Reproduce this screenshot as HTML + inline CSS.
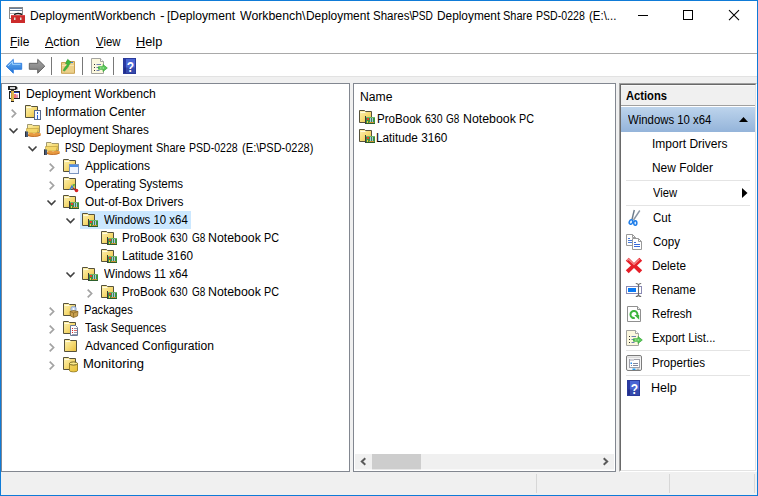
<!DOCTYPE html>
<html><head><meta charset="utf-8"><title>DeploymentWorkbench</title>
<style>
html,body{margin:0;padding:0;background:#fff;overflow:hidden}
#w{position:relative;width:758px;height:496px;background:#fff;overflow:hidden;font-family:"Liberation Sans", sans-serif;color:#000}
.t{position:absolute;white-space:nowrap;line-height:16px;height:16px;transform-origin:0 50%;display:block}
.t u{text-decoration:underline;text-underline-offset:1px}
.ic{position:absolute;overflow:visible}
.b{position:absolute}
.sel{position:absolute;background:#cce8ff}
</style></head><body>
<div id="w">
<svg width="0" height="0" style="position:absolute"><defs>
<linearGradient id="gF" x1="0" y1="0" x2="1" y2="1"><stop offset="0" stop-color="#fdf3b4"/><stop offset=".5" stop-color="#f6dc78"/><stop offset="1" stop-color="#e8bd3a"/></linearGradient>
<g id="folder"><path d="M0.5 2.500 H5.500 L6.500 3.500 H12.500 V14.500 H0.500 Z" fill="url(#gF)" stroke="#56523c" stroke-width="1"/><path d="M1.500 4.500H6.500" stroke="#fffbe0" stroke-width="1" fill="none"/></g>
<g id="i-plain"><use href="#folder" x="1"/></g>
<g id="i-drv"><use href="#folder"/><g transform="translate(0,-1)"><rect x="6" y="9" width="1" height="8" fill="#3a3a3a"/><rect x="7" y="10.500" width="9" height="6" fill="#3d9140"/><rect x="7" y="10" width="9" height="1" fill="#6fb56a"/><rect x="7" y="16" width="9" height="1" fill="#2c5e2c"/><rect x="8" y="11" width="2" height="2" fill="#e8402a"/><rect x="8" y="14" width="1" height="2" fill="#f0d040"/><rect x="11" y="11" width="1" height="4" fill="#a8c0e8"/><rect x="13" y="11" width="1" height="4" fill="#a8c0e8"/><rect x="10" y="15" width="5" height="1" fill="#c89030"/></g></g>
<g id="i-info"><use href="#folder"/><rect x="9.500" y="7.500" width="6" height="9" fill="#f4f8ff" stroke="#5a6a8a"/><rect x="12" y="9" width="1" height="2" fill="#2a63d0"/><rect x="12" y="12" width="1" height="4" fill="#2a63d0"/></g>
<g id="i-share"><path d="M2.500 3.500 H7 L8 4.500 H14.500 V11.500 H2.500 Z" fill="url(#gF)" stroke="#8a8258" stroke-width=".8"/><path d="M1.500 7.500 H13.500 L12 12 H1.500 Z" fill="#f4d76a" stroke="#b89a3a" stroke-width=".6"/><path d="M3 13 C5 11.200 7 11.500 9 12.500 C11 11.500 13.500 11.500 16 12.500 L15.500 14.500 C12 16 6 16 3 15 Z" fill="#e89a40"/><path d="M3 14.500 C7 16 12 15.800 15.500 14.200" stroke="#b8601a" stroke-width=".8" fill="none"/><rect x="0" y="10.500" width="3" height="5.500" fill="#4a5a72"/><rect x="0" y="10.500" width="1" height="5.500" fill="#2a2f3a"/></g>
<g id="i-apps"><use href="#folder"/><rect x="6.500" y="7.500" width="9" height="9" fill="#f0f5ff" stroke="#7a94c0"/><rect x="7" y="8" width="8" height="2" fill="#4f8fe6"/></g>
<g id="i-os"><use href="#folder"/><path d="M6 15 L9 9.500 L11.500 15 L10 15 L9 12.500 L7.500 15 Z" fill="#3a7bd5"/><path d="M9.500 9.500 L12 9 L11 12 Z" fill="#3fae3f"/><circle cx="13.500" cy="15.500" r="1.800" fill="#dd2222"/><path d="M10 13 L13 15.500" stroke="#aa2222" stroke-width="1.200"/></g>
<g id="i-pkg"><use href="#folder"/><circle cx="10.500" cy="8" r="2.800" fill="#b8ccec" stroke="#7a94c0" stroke-width=".6"/><circle cx="10.500" cy="8" r="1" fill="#fff"/><path d="M7 10.500 L10.500 9.500 L15 10.500 L14.500 15 L10.500 16.500 L7.500 15 Z" fill="#c8a050" stroke="#7a5a1a" stroke-width=".7"/><path d="M7 10.500 L10.500 12 L15 10.500 M10.500 12 V16.500" stroke="#7a5a1a" stroke-width=".6" fill="none"/></g>
<g id="i-ts"><use href="#folder"/><path d="M7.500 6.500 H12.500 L14.500 8.500 V16.500 H7.500 Z" fill="#fdfdff" stroke="#6a7a9a"/><rect x="9" y="9" width="1" height="1" fill="#d22"/><rect x="11" y="9" width="3" height="1" fill="#99a"/><rect x="9" y="11" width="1" height="1" fill="#d22"/><rect x="11" y="11" width="3" height="1" fill="#d66"/><rect x="9" y="13" width="1" height="1" fill="#d22"/><rect x="11" y="13" width="3" height="1" fill="#99a"/><rect x="9" y="15" width="5" height="1" fill="#99a"/></g>
<g id="i-mon"><use href="#folder"/><path d="M6.500 8.500 V15.500 C6.500 17.200 14.500 17.200 14.500 15.500 V8.500" fill="url(#gF)" stroke="#6a5a1a" stroke-width=".9"/><path d="M6.500 8.500 V15.500 C6.500 17.200 14.500 17.200 14.500 15.500 V8.500 Z" fill="#e8c030" opacity=".6"/><ellipse cx="10.500" cy="8.500" rx="4" ry="1.600" fill="#fbe98a" stroke="#6a5a1a" stroke-width=".9"/></g>
<g id="i-wb"><rect x="1" y="1" width="8" height="4" fill="#222"/><rect x="3" y="2" width="5" height="2" fill="#d0d0d0"/><path d="M9 1 L10.500 2.500 L10.200 5 L9 4 Z" fill="#222"/><rect x="4" y="5" width="3" height="1.500" fill="#444"/><rect x="2.500" y="6.500" width="10" height="7" fill="#fff" stroke="#222"/><rect x="3" y="7" width="9" height="1" fill="#2a3fb8"/><rect x="7" y="9" width="2" height="4" fill="#f4737c"/><rect x="9" y="9.500" width="2" height="3.500" fill="#dc93ab"/><rect x="4" y="6" width="3" height="10" fill="#dcb44e"/><rect x="4" y="6" width="1" height="10" fill="#c09a3c"/><rect x="4" y="16" width="3" height="1" fill="#222"/></g>
<g id="i-app"><rect x="1.500" y="1.500" width="13" height="11" fill="#fff" stroke="#8a8a8a"/><path d="M2 2.500H14M2 4.500H14" stroke="#6a7f9a" fill="none"/><path d="M2 7.500H14" stroke="#b0b0b0" fill="none"/><rect x="3" y="9" width="14" height="8" fill="#cc2b2b"/><rect x="3" y="9" width="14" height="1" fill="#dc4a4a"/><path d="M6.500 9 C6.500 7 13.500 7 13.500 9" fill="none" stroke="#1a1a1a" stroke-width="1.300"/><rect x="6" y="11.500" width="1.500" height="2.500" fill="#d8e0d8"/><rect x="12" y="11.500" width="1.500" height="2.500" fill="#d8e0d8"/></g>
<linearGradient id="gB" x1="0" y1="0" x2="0" y2="1"><stop offset="0" stop-color="#6db3f5"/><stop offset="1" stop-color="#1f6fd0"/></linearGradient>
<linearGradient id="gG" x1="0" y1="0" x2="0" y2="1"><stop offset="0" stop-color="#a4a4a4"/><stop offset="1" stop-color="#7a7a7a"/></linearGradient>
<g id="i-back"><path d="M1.200 9.200 L8.300 2.300 V6.300 H16.700 V12.300 H8.300 V16.200 Z" fill="url(#gB)" stroke="#2a7ae0" stroke-width=".9"/><path d="M3 9 L7.500 4.600 V7.300 H15.500" stroke="#9fd4ff" stroke-width="1" fill="none"/></g>
<g id="i-fwd"><path d="M16.800 9.200 L9.700 2.300 V6.300 H1.300 V12.300 H9.700 V16.200 Z" fill="url(#gG)" stroke="#5a5a5a" stroke-width=".9"/></g>
<g id="i-up"><path d="M2.500 5.500 H6.500 L7.500 4.500 H15.500 V16.300 H2.500 Z" fill="#ecd08a" stroke="#c8a050"/><path d="M3 8.500H15" stroke="#f6e4b0" fill="none"/><path d="M4.200 13.500 C5.500 10.500 7 9 8.500 7.500 L6.500 6.500 L8.700 2.300 L12.500 5.500 L10.800 6.300 C10 9 8 12 5.500 14 Z" fill="#3cb83c" stroke="#2a8a2a" stroke-width=".5"/><rect x="12" y="5" width="2" height="1" fill="#3a7ad8"/></g>
<g id="i-export"><path d="M0.500 0.500 H9.500 L12.500 3.500 V15.500 H0.500 Z" fill="#fcf8de" stroke="#a4a4a0"/><path d="M9.500 0.500 V3.500 H12.500" fill="#fff" stroke="#a4a4a0"/><path d="M3 6.500H4M3 9.500H4M3 12.500H4" stroke="#333" fill="none"/><path d="M5.500 6.500H10M5.500 9.500H8M5.500 12.500H8.500" stroke="#7080b0" fill="none"/><path d="M7.500 8.700 H12 V6.500 L16.300 10 L12 13.500 V11.300 H7.500 Z" fill="#5cc85c" stroke="#32a832" stroke-width=".7"/><path d="M9 10H14" stroke="#b8f0b0" stroke-width="1" fill="none" stroke-dasharray="1.500 1"/></g>
<linearGradient id="gH" x1="0" y1="0" x2="1" y2="1"><stop offset="0" stop-color="#3f6fd8"/><stop offset="1" stop-color="#1a2f8a"/></linearGradient>
<g id="i-help"><rect x="0" y="0" width="13" height="16" fill="#4a66d4"/><rect x="0" y="0" width="3" height="16" fill="#2a3aa4"/><rect x="0" y="9.500" width="13" height="6.500" fill="#101860" opacity=".35"/><rect x="0.500" y="0.500" width="12" height="15" fill="none" stroke="#2a3a9a" stroke-width="1"/><text transform="translate(7.400 13.800) scale(.8 1)" x="0" y="0" font-family="Liberation Sans, sans-serif" font-size="15" font-weight="700" fill="#fff" text-anchor="middle">?</text></g>
<g id="i-cut"><path d="M9.300 1 L7 10.500" stroke="#6a7a8a" stroke-width="1.400" fill="none"/><path d="M14.800 1.500 L8.500 11" stroke="#8a96a4" stroke-width="1.400" fill="none"/><ellipse cx="6" cy="13" rx="1.700" ry="2.300" transform="rotate(25 6 13)" fill="#d8ecff" stroke="#1a7ae8" stroke-width="1.400"/><ellipse cx="10.300" cy="14" rx="1.600" ry="2.300" fill="#d8ecff" stroke="#1a7ae8" stroke-width="1.400"/></g>
<g id="i-copy"><path d="M1.500 1.500 H7.500 L10.500 4.500 V12.500 H1.500 Z" fill="#fff" stroke="#9a9a9a"/><path d="M7.500 1.500 V4.500 H10.500" fill="none" stroke="#9a9a9a"/><path d="M3 5.500H5M3 7.500H7M3 9.500H7" stroke="#4a7ad8" fill="none"/><path d="M7.500 5.500 H13.500 L16.500 8.500 V16.500 H7.500 Z" fill="#fff" stroke="#9a9a9a"/><path d="M13.500 5.500 V8.500 H16.500" fill="none" stroke="#9a9a9a"/><path d="M9 9.500H11M9 11.500H15M9 13.500H15" stroke="#3a6ad8" fill="none"/></g>
<g id="i-delete"><path d="M0.800 3.700 L3.700 0.800 L9 6 L14.300 0.800 L17.200 3.700 L12 8.500 L17.200 13.300 L14.300 16.200 L9 11 L3.700 16.200 L0.800 13.300 L6 8.500 Z" fill="#e61e28"/><path d="M2.200 3.500 L3.500 2.200 L9 7.500 L14.500 2.200" stroke="#f48a8a" stroke-width="1.200" fill="none"/></g>
<g id="i-rename"><rect x="1.500" y="5.500" width="15" height="7" fill="#fff" stroke="#8a8ab4"/><rect x="3" y="7" width="8" height="4" fill="#0a7af4"/><path d="M10.800 2.500 C12.500 2.500 13.500 3 13.500 4.500 V13.500 C13.500 15 12.500 15.500 10.800 15.500 M16.200 2.500 C14.500 2.500 13.500 3 13.500 4.500 M13.500 13.500 C13.500 15 14.500 15.500 16.200 15.500" stroke="#6a6a6a" stroke-width="1.100" fill="none"/></g>
<g id="i-refresh"><path d="M2.500 1.500 H12.500 L15.500 4.500 V16.500 H2.500 Z" fill="#fff" stroke="#909090"/><path d="M12.500 1.500 V4.500 H15.500" fill="#f0f0f0" stroke="#909090"/><path d="M12.300 10.500 A3.500 3.500 0 1 0 9.800 12.900" fill="none" stroke="#3db53d" stroke-width="2"/><path d="M9.300 10 H14.200 V14.800 Z" fill="#3db53d"/></g>
<g id="i-props"><rect x="1.500" y="1.500" width="15" height="15" rx="1.500" fill="#f4f4f4" stroke="#7c7c7c"/><rect x="2.500" y="2.500" width="13" height="1.500" fill="#dcdcdc"/><rect x="4.500" y="5.500" width="10" height="8" fill="#fff" stroke="#a0a0a8"/><rect x="5" y="5" width="4" height="2" fill="#d0d0d8"/><rect x="5.500" y="8.500" width="1.500" height="1.500" fill="#1f8af0"/><path d="M8 9.500H13M6 11.500H7M8 11.500H13" stroke="#8088a0" fill="none"/><rect x="7.500" y="14.500" width="3" height="1.500" fill="#1f9af4"/><rect x="11.500" y="14.500" width="3" height="1.500" fill="#b0b0b0"/></g>
</defs></svg>

<!-- window frame -->
<div class="b" style="left:0;top:0;width:758px;height:496px;box-sizing:border-box;border:1px solid #0f7bd7"></div>
<!-- title bar icon -->
<svg class="ic" style="left:8px;top:6px" width="18" height="18" viewBox="0 0 18 18"><use href="#i-app"/></svg>
<!-- caption buttons -->
<svg class="ic" style="left:630px;top:1px" width="127" height="30" viewBox="0 0 127 30">
<path d="M8 14.5H18" stroke="#000" stroke-width="1" fill="none"/>
<rect x="53.5" y="9.5" width="9" height="9" stroke="#000" stroke-width="1" fill="none"/>
<path d="M99 9.2 L109 19.2 M109 9.2 L99 19.2" stroke="#000" stroke-width="1.1" fill="none"/>
</svg>
<!-- menu bottom line -->
<div class="b" style="left:1px;top:53px;width:756px;height:1px;background:#a9a9a9"></div>
<!-- toolbar -->
<div class="b" style="left:1px;top:76px;width:756px;height:7px;background:#f0f0f0"></div>
<div class="b" style="left:1px;top:76px;width:756px;height:1px;background:#e2e2e2"></div>
<div class="b" style="left:51px;top:57px;width:1px;height:18px;background:#787878"></div>
<div class="b" style="left:82px;top:57px;width:1px;height:18px;background:#787878"></div>
<div class="b" style="left:113px;top:57px;width:1px;height:18px;background:#787878"></div>
<svg class="ic" style="left:5px;top:57px" width="18" height="18" viewBox="0 0 18 18"><use href="#i-back"/></svg>
<svg class="ic" style="left:28px;top:57px" width="18" height="18" viewBox="0 0 18 18"><use href="#i-fwd"/></svg>
<svg class="ic" style="left:59px;top:57px" width="18" height="18" viewBox="0 0 18 18"><use href="#i-up"/></svg>
<svg class="ic" style="left:91px;top:58px" width="18" height="18" viewBox="0 0 18 18"><use href="#i-export"/></svg>
<svg class="ic" style="left:123px;top:58px" width="18" height="18" viewBox="0 0 18 18"><use href="#i-help"/></svg>
<!-- client bg -->
<div class="b" style="left:1px;top:83px;width:756px;height:412px;background:#f0f0f0"></div>
<!-- tree pane -->
<div class="b" style="left:1px;top:83px;width:349px;height:389px;box-sizing:border-box;border:1px solid #828790;background:#fff"></div>
<!-- middle pane -->
<div class="b" style="left:353px;top:83px;width:263px;height:389px;box-sizing:border-box;border:1px solid #828790;background:#fff"></div>
<!-- h scrollbar -->
<div class="b" style="left:355px;top:454px;width:259px;height:15px;background:#f0f0f0;border-bottom:1px solid #f8f8f8"></div>
<div class="b" style="left:372px;top:454px;width:49px;height:15px;background:#cdcdcd;border-bottom:1px solid #e8e8e8"></div>
<svg class="ic" style="left:355px;top:454px" width="16" height="16" viewBox="0 0 16 16"><path d="M10.300 4.200 L6.800 7.500 L10.300 10.800" fill="none" stroke="#5a5a5a" stroke-width="2"/></svg>
<svg class="ic" style="left:598px;top:454px" width="16" height="16" viewBox="0 0 16 16"><path d="M5.700 4.200 L9.200 7.500 L5.700 10.800" fill="none" stroke="#5a5a5a" stroke-width="2"/></svg>
<!-- actions pane -->
<div class="b" style="left:619px;top:83px;width:138px;height:389px;box-sizing:border-box;background:#fff;border-top:1px solid #a0a0a0;border-left:1px solid #a0a0a0;border-right:1px solid #fff;border-bottom:1px solid #fff"></div>
<div class="b" style="left:620px;top:84px;width:136px;height:387px;box-sizing:border-box;border-top:1px solid #696969;border-left:1px solid #696969;border-right:1px solid #e3e3e3;border-bottom:1px solid #e3e3e3"></div>
<div class="b" style="left:621px;top:85px;width:134px;height:20px;background:#f0f0f0;border-top:1px solid #fafafa;box-sizing:border-box"></div>
<div class="b" style="left:621px;top:105px;width:134px;height:1px;background:#a0a0a0"></div>
<div class="b" style="left:621px;top:107px;width:134px;height:25px;background:linear-gradient(#bdd4ec,#94b4da)"></div>
<svg class="ic" style="left:738px;top:115px" width="12" height="9" viewBox="0 0 12 9"><path d="M1 7 L5.5 2 L10 7 Z" fill="#000"/></svg>
<svg class="ic" style="left:741px;top:187px" width="8" height="12" viewBox="0 0 8 12"><path d="M1 1 L6.5 6 L1 11 Z" fill="#000"/></svg>
<div class="b" style="left:626px;top:180px;width:124px;height:1px;background:#e4e4e4"></div>
<div class="b" style="left:626px;top:205px;width:124px;height:1px;background:#e4e4e4"></div>
<div class="b" style="left:626px;top:350px;width:124px;height:1px;background:#e4e4e4"></div>
<div class="b" style="left:626px;top:375px;width:124px;height:1px;background:#e4e4e4"></div>
<!-- action icons -->
<svg class="ic" style="left:625px;top:209px" width="18" height="18" viewBox="0 0 18 18"><use href="#i-cut"/></svg>
<svg class="ic" style="left:625px;top:233px" width="18" height="18" viewBox="0 0 18 18"><use href="#i-copy"/></svg>
<svg class="ic" style="left:625px;top:257px" width="18" height="18" viewBox="0 0 18 18"><use href="#i-delete"/></svg>
<svg class="ic" style="left:625px;top:281px" width="18" height="18" viewBox="0 0 18 18"><use href="#i-rename"/></svg>
<svg class="ic" style="left:625px;top:305px" width="18" height="18" viewBox="0 0 18 18"><use href="#i-refresh"/></svg>
<svg class="ic" style="left:626px;top:330px" width="18" height="18" viewBox="0 0 18 18"><use href="#i-export"/></svg>
<svg class="ic" style="left:625px;top:354px" width="18" height="18" viewBox="0 0 18 18"><use href="#i-props"/></svg>
<svg class="ic" style="left:627px;top:380px" width="18" height="18" viewBox="0 0 18 18"><use href="#i-help"/></svg>
<!-- list icons -->
<svg class="ic" style="left:359px;top:108px" width="18" height="18" viewBox="0 0 18 18"><use href="#i-drv"/></svg>
<svg class="ic" style="left:359px;top:127px" width="18" height="18" viewBox="0 0 18 18"><use href="#i-drv"/></svg>
<!-- status bar -->
<div class="b" style="left:536px;top:474px;width:1px;height:19px;background:#d7d7d7"></div>
<div class="b" style="left:669px;top:474px;width:1px;height:19px;background:#d7d7d7"></div>
<div class="b" style="left:754px;top:474px;width:1px;height:19px;background:#d7d7d7"></div>

<svg class="ic" style="left:7px;top:85px" width="18" height="18" viewBox="0 0 18 18"><use href="#i-wb"/></svg>
<svg class="ic" style="left:25px;top:103px" width="18" height="18" viewBox="0 0 18 18"><use href="#i-info"/></svg>
<svg class="ic" style="left:6px;top:103px" width="16" height="18" viewBox="0 0 16 18"><path d="M5.7 6.6 L9.6 10.5 L5.7 14.4" fill="none" stroke="#a3a3a3" stroke-width="1.7"/></svg>
<svg class="ic" style="left:25px;top:121px" width="18" height="18" viewBox="0 0 18 18"><use href="#i-share"/></svg>
<svg class="ic" style="left:6px;top:121px" width="16" height="18" viewBox="0 0 16 18"><path d="M3.5 7.5 L7.5 11.5 L11.5 7.5" fill="none" stroke="#404040" stroke-width="1.6"/></svg>
<svg class="ic" style="left:44px;top:139px" width="18" height="18" viewBox="0 0 18 18"><use href="#i-share"/></svg>
<svg class="ic" style="left:25px;top:139px" width="16" height="18" viewBox="0 0 16 18"><path d="M3.5 7.5 L7.5 11.5 L11.5 7.5" fill="none" stroke="#404040" stroke-width="1.6"/></svg>
<svg class="ic" style="left:63px;top:157px" width="18" height="18" viewBox="0 0 18 18"><use href="#i-apps"/></svg>
<svg class="ic" style="left:44px;top:157px" width="16" height="18" viewBox="0 0 16 18"><path d="M5.7 6.6 L9.6 10.5 L5.7 14.4" fill="none" stroke="#a3a3a3" stroke-width="1.7"/></svg>
<svg class="ic" style="left:63px;top:175px" width="18" height="18" viewBox="0 0 18 18"><use href="#i-os"/></svg>
<svg class="ic" style="left:44px;top:175px" width="16" height="18" viewBox="0 0 16 18"><path d="M5.7 6.6 L9.6 10.5 L5.7 14.4" fill="none" stroke="#a3a3a3" stroke-width="1.7"/></svg>
<svg class="ic" style="left:63px;top:193px" width="18" height="18" viewBox="0 0 18 18"><use href="#i-drv"/></svg>
<svg class="ic" style="left:44px;top:193px" width="16" height="18" viewBox="0 0 16 18"><path d="M3.5 7.5 L7.5 11.5 L11.5 7.5" fill="none" stroke="#404040" stroke-width="1.6"/></svg>
<div class="sel" style="left:80px;top:211px;width:111px;height:18px"></div>
<svg class="ic" style="left:82px;top:211px" width="18" height="18" viewBox="0 0 18 18"><use href="#i-drv"/></svg>
<svg class="ic" style="left:63px;top:211px" width="16" height="18" viewBox="0 0 16 18"><path d="M3.5 7.5 L7.5 11.5 L11.5 7.5" fill="none" stroke="#404040" stroke-width="1.6"/></svg>
<svg class="ic" style="left:101px;top:229px" width="18" height="18" viewBox="0 0 18 18"><use href="#i-drv"/></svg>
<svg class="ic" style="left:101px;top:247px" width="18" height="18" viewBox="0 0 18 18"><use href="#i-drv"/></svg>
<svg class="ic" style="left:82px;top:265px" width="18" height="18" viewBox="0 0 18 18"><use href="#i-drv"/></svg>
<svg class="ic" style="left:63px;top:265px" width="16" height="18" viewBox="0 0 16 18"><path d="M3.5 7.5 L7.5 11.5 L11.5 7.5" fill="none" stroke="#404040" stroke-width="1.6"/></svg>
<svg class="ic" style="left:101px;top:283px" width="18" height="18" viewBox="0 0 18 18"><use href="#i-drv"/></svg>
<svg class="ic" style="left:82px;top:283px" width="16" height="18" viewBox="0 0 16 18"><path d="M5.7 6.6 L9.6 10.5 L5.7 14.4" fill="none" stroke="#a3a3a3" stroke-width="1.7"/></svg>
<svg class="ic" style="left:63px;top:301px" width="18" height="18" viewBox="0 0 18 18"><use href="#i-pkg"/></svg>
<svg class="ic" style="left:44px;top:301px" width="16" height="18" viewBox="0 0 16 18"><path d="M5.7 6.6 L9.6 10.5 L5.7 14.4" fill="none" stroke="#a3a3a3" stroke-width="1.7"/></svg>
<svg class="ic" style="left:63px;top:319px" width="18" height="18" viewBox="0 0 18 18"><use href="#i-ts"/></svg>
<svg class="ic" style="left:44px;top:319px" width="16" height="18" viewBox="0 0 16 18"><path d="M5.7 6.6 L9.6 10.5 L5.7 14.4" fill="none" stroke="#a3a3a3" stroke-width="1.7"/></svg>
<svg class="ic" style="left:63px;top:337px" width="18" height="18" viewBox="0 0 18 18"><use href="#i-plain"/></svg>
<svg class="ic" style="left:44px;top:337px" width="16" height="18" viewBox="0 0 16 18"><path d="M5.7 6.6 L9.6 10.5 L5.7 14.4" fill="none" stroke="#a3a3a3" stroke-width="1.7"/></svg>
<svg class="ic" style="left:63px;top:355px" width="18" height="18" viewBox="0 0 18 18"><use href="#i-mon"/></svg>
<svg class="ic" style="left:44px;top:355px" width="16" height="18" viewBox="0 0 16 18"><path d="M5.7 6.6 L9.6 10.5 L5.7 14.4" fill="none" stroke="#a3a3a3" stroke-width="1.7"/></svg>
<span class="t" id="t0" style="left:29.99px;top:8px;font-size:12px;font-weight:400;transform:scaleX(1.0081)">DeploymentWorkbench</span>
<span class="t" id="t1" style="left:160.00px;top:8px;font-size:12px;font-weight:400;transform:scaleX(1.1500)">-</span>
<span class="t" id="t2" style="left:166.99px;top:8px;font-size:12px;font-weight:400;transform:scaleX(1.0106)">[Deployment</span>
<span class="t" id="t3" style="left:239.70px;top:8px;font-size:12px;font-weight:400;transform:scaleX(1.0266)">Workbench\</span>
<span class="t" id="t4" style="left:306.00px;top:8px;font-size:12px;font-weight:400;transform:scaleX(0.9952)">Deployment</span>
<span class="t" id="t5" style="left:372.94px;top:8px;font-size:12px;font-weight:400;transform:scaleX(0.9600)">Shares\</span>
<span class="t" id="t6" style="left:412.45px;top:8px;font-size:12px;font-weight:400;transform:scaleX(0.8478)">PSD</span>
<span class="t" id="t7" style="left:436.51px;top:8px;font-size:12px;font-weight:400;transform:scaleX(0.9873)">Deployment</span>
<span class="t" id="t8" style="left:502.98px;top:8px;font-size:12px;font-weight:400;transform:scaleX(0.9161)">Share</span>
<span class="t" id="t9" style="left:536.42px;top:8px;font-size:12px;font-weight:400;transform:scaleX(0.8815)">PSD-0228</span>
<span class="t" id="t10" style="left:589.44px;top:8px;font-size:12px;font-weight:400;transform:scaleX(0.9556)">(E:\...</span>
<span class="t" id="t11" style="left:10.00px;top:33.5px;font-size:12px;font-weight:400;transform:scaleX(1.0000)"><u>F</u>ile</span>
<span class="t" id="t12" style="left:45.30px;top:33.5px;font-size:12px;font-weight:400;transform:scaleX(1.0424)"><u>A</u>ction</span>
<span class="t" id="t13" style="left:96.30px;top:33.5px;font-size:12px;font-weight:400;transform:scaleX(0.9500)"><u>V</u>iew</span>
<span class="t" id="t14" style="left:136.13px;top:33.5px;font-size:12px;font-weight:400;transform:scaleX(1.0652)"><u>H</u>elp</span>
<span class="t" id="t15" style="left:26.48px;top:85.5px;font-size:12px;font-weight:400;transform:scaleX(1.0151)">Deployment Workbench</span>
<span class="t" id="t16" style="left:45.49px;top:103.5px;font-size:12px;font-weight:400;transform:scaleX(1.0111)">Information Center</span>
<span class="t" id="t17" style="left:45.52px;top:121.5px;font-size:12px;font-weight:400;transform:scaleX(0.9750)">Deployment Shares</span>
<span class="t" id="t18" style="left:65.49px;top:139.5px;font-size:12px;font-weight:400;transform:scaleX(0.8130)">PSD</span>
<span class="t" id="t19" style="left:89.01px;top:139.5px;font-size:12px;font-weight:400;transform:scaleX(0.9873)">Deployment</span>
<span class="t" id="t20" style="left:155.59px;top:139.5px;font-size:12px;font-weight:400;transform:scaleX(0.9129)">Share</span>
<span class="t" id="t21" style="left:188.92px;top:139.5px;font-size:12px;font-weight:400;transform:scaleX(0.8778)">PSD-0228</span>
<span class="t" id="t22" style="left:241.57px;top:139.5px;font-size:12px;font-weight:400;transform:scaleX(0.9333)">(E:\</span>
<span class="t" id="t23" style="left:259.38px;top:139.5px;font-size:12px;font-weight:400;transform:scaleX(0.9155)">PSD-0228)</span>
<span class="t" id="t24" style="left:84.50px;top:157.5px;font-size:12px;font-weight:400;transform:scaleX(1.0062)">Applications</span>
<span class="t" id="t25" style="left:84.50px;top:175.5px;font-size:12px;font-weight:400;transform:scaleX(0.9618)">Operating Systems</span>
<span class="t" id="t26" style="left:84.50px;top:193.5px;font-size:12px;font-weight:400;transform:scaleX(0.9909)">Out-of-Box Drivers</span>
<span class="t" id="t27" style="left:103.50px;top:211.5px;font-size:12px;font-weight:400;transform:scaleX(0.9511)">Windows 10 x64</span>
<span class="t" id="t28" style="left:122.04px;top:229.5px;font-size:12px;font-weight:400;transform:scaleX(0.9644)">ProBook</span>
<span class="t" id="t29" style="left:170.20px;top:229.5px;font-size:12px;font-weight:400;transform:scaleX(0.8750)">630</span>
<span class="t" id="t30" style="left:191.50px;top:229.5px;font-size:12px;font-weight:400;transform:scaleX(0.8313)">G8</span>
<span class="t" id="t31" style="left:207.97px;top:229.5px;font-size:12px;font-weight:400;transform:scaleX(1.0280)">Notebook</span>
<span class="t" id="t32" style="left:264.00px;top:229.5px;font-size:12px;font-weight:400;transform:scaleX(0.9000)">PC</span>
<span class="t" id="t33" style="left:121.53px;top:247.5px;font-size:12px;font-weight:400;transform:scaleX(0.9746)">Latitude 3160</span>
<span class="t" id="t34" style="left:103.50px;top:265.5px;font-size:12px;font-weight:400;transform:scaleX(0.9621)">Windows 11 x64</span>
<span class="t" id="t35" style="left:122.04px;top:283.5px;font-size:12px;font-weight:400;transform:scaleX(0.9644)">ProBook</span>
<span class="t" id="t36" style="left:170.20px;top:283.5px;font-size:12px;font-weight:400;transform:scaleX(0.8750)">630</span>
<span class="t" id="t37" style="left:191.50px;top:283.5px;font-size:12px;font-weight:400;transform:scaleX(0.8313)">G8</span>
<span class="t" id="t38" style="left:207.97px;top:283.5px;font-size:12px;font-weight:400;transform:scaleX(1.0280)">Notebook</span>
<span class="t" id="t39" style="left:264.00px;top:283.5px;font-size:12px;font-weight:400;transform:scaleX(0.9000)">PC</span>
<span class="t" id="t40" style="left:83.58px;top:301.5px;font-size:12px;font-weight:400;transform:scaleX(0.9250)">Packages</span>
<span class="t" id="t41" style="left:84.50px;top:319.5px;font-size:12px;font-weight:400;transform:scaleX(0.9227)">Task Sequences</span>
<span class="t" id="t42" style="left:84.50px;top:337.5px;font-size:12px;font-weight:400;transform:scaleX(1.0063)">Advanced Configuration</span>
<span class="t" id="t43" style="left:83.41px;top:355.5px;font-size:12px;font-weight:400;transform:scaleX(1.0870)">Monitoring</span>
<span class="t" id="t44" style="left:360.49px;top:89px;font-size:12px;font-weight:400;transform:scaleX(1.0129)">Name</span>
<span class="t" id="t45" style="left:376.64px;top:110.5px;font-size:12px;font-weight:400;transform:scaleX(0.9644)">ProBook</span>
<span class="t" id="t46" style="left:424.80px;top:110.5px;font-size:12px;font-weight:400;transform:scaleX(0.8750)">630</span>
<span class="t" id="t47" style="left:446.10px;top:110.5px;font-size:12px;font-weight:400;transform:scaleX(0.8312)">G8</span>
<span class="t" id="t48" style="left:462.57px;top:110.5px;font-size:12px;font-weight:400;transform:scaleX(1.0280)">Notebook</span>
<span class="t" id="t49" style="left:518.60px;top:110.5px;font-size:12px;font-weight:400;transform:scaleX(0.9000)">PC</span>
<span class="t" id="t50" style="left:376.42px;top:129.5px;font-size:12px;font-weight:400;transform:scaleX(0.9803)">Latitude 3160</span>
<span class="t" id="t51" style="left:626.20px;top:88px;font-size:12px;font-weight:700;transform:scaleX(0.9318)">Actions</span>
<span class="t" id="t52" style="left:628.20px;top:111.5px;font-size:12px;font-weight:400;transform:scaleX(0.9477)">Windows 10 x64</span>
<span class="t" id="t53" style="left:651.50px;top:136px;font-size:12px;font-weight:400;transform:scaleX(1.0014)">Import Drivers</span>
<span class="t" id="t54" style="left:651.51px;top:160px;font-size:12px;font-weight:400;transform:scaleX(0.9933)">New Folder</span>
<span class="t" id="t55" style="left:652.50px;top:185px;font-size:12px;font-weight:400;transform:scaleX(0.9346)">View</span>
<span class="t" id="t56" style="left:652.50px;top:209.5px;font-size:12px;font-weight:400;transform:scaleX(0.9632)">Cut</span>
<span class="t" id="t57" style="left:652.50px;top:233.5px;font-size:12px;font-weight:400;transform:scaleX(0.9643)">Copy</span>
<span class="t" id="t58" style="left:651.52px;top:257.5px;font-size:12px;font-weight:400;transform:scaleX(0.9788)">Delete</span>
<span class="t" id="t59" style="left:651.54px;top:281.5px;font-size:12px;font-weight:400;transform:scaleX(0.9614)">Rename</span>
<span class="t" id="t60" style="left:651.55px;top:305.7px;font-size:12px;font-weight:400;transform:scaleX(0.9450)">Refresh</span>
<span class="t" id="t61" style="left:651.55px;top:330px;font-size:12px;font-weight:400;transform:scaleX(0.9523)">Export List...</span>
<span class="t" id="t62" style="left:651.53px;top:354.7px;font-size:12px;font-weight:400;transform:scaleX(0.9685)">Properties</span>
<span class="t" id="t63" style="left:651.46px;top:379.5px;font-size:12px;font-weight:400;transform:scaleX(1.0435)">Help</span>
</div>
</body></html>
